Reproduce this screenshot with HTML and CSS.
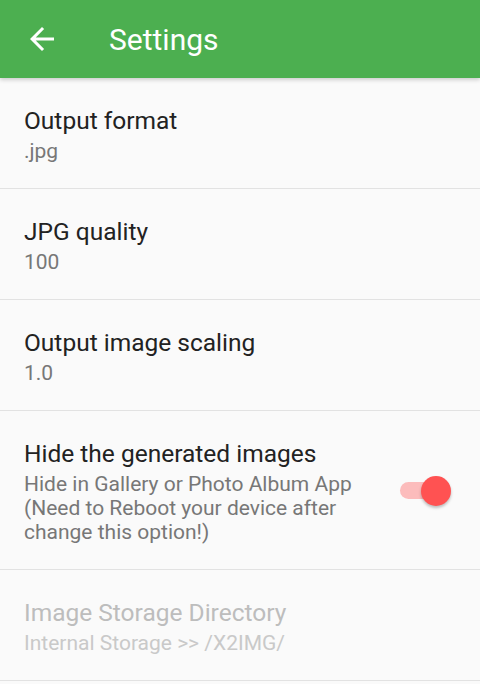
FILE: index.html
```html
<!DOCTYPE html>
<html>
<head>
<meta charset="utf-8">
<link rel="stylesheet" href="styles.css">
</head>
<body>
<header class="appbar">
  <svg class="back" viewBox="0 0 24 24" width="36" height="36"><path fill="#fff" d="M20 11H7.83l5.59-5.59L12 4l-8 8 8 8 1.41-1.41L7.83 13H20v-2z"/></svg>
  <h1 class="title">Settings</h1>
</header>
<main class="list">
  <div class="pref">
    <div class="text">
      <div class="pt">Output format</div>
      <div class="ps">.jpg</div>
    </div>
  </div>
  <div class="pref">
    <div class="text">
      <div class="pt">JPG quality</div>
      <div class="ps">100</div>
    </div>
  </div>
  <div class="pref">
    <div class="text">
      <div class="pt">Output image scaling</div>
      <div class="ps">1.0</div>
    </div>
  </div>
  <div class="pref">
    <div class="text">
      <div class="pt">Hide the generated images</div>
      <div class="ps">Hide in Gallery or Photo Album App<br>(Need to Reboot your device after<br>change this option!)</div>
    </div>
    <div class="switch">
      <div class="track"></div>
      <div class="thumb"></div>
    </div>
  </div>
  <div class="pref disabled">
    <div class="text">
      <div class="pt">Image Storage Directory</div>
      <div class="ps">Internal Storage &gt;&gt; /X2IMG/</div>
    </div>
  </div>
</main>
</body>
</html>
```
FILE: styles.css
```css
html, body {
  margin: 0;
  padding: 0;
  background: #fafafa;
  font-family: Roboto, "Liberation Sans", sans-serif;
}
.appbar {
  height: 78px;
  background: #4caf50;
  display: flex;
  align-items: center;
  box-shadow: 0 2px 4px rgba(0,0,0,0.18);
  position: relative;
  z-index: 1;
}
.back {
  margin-left: 24px;
  flex: none;
}
.title {
  margin: 0 0 0 49px;
  font-size: 30px;
  font-weight: 400;
  color: #fff;
  line-height: 1;
  padding-top: 1px;
}
.list {
  display: flex;
  flex-direction: column;
}
.pref {
  display: flex;
  align-items: center;
  padding: 26px 29px 25px 24px;
  border-bottom: 1px solid #e2e2e2;
}
.text {
  flex: 1;
}
.pt {
  font-size: 24.5px;
  line-height: 34px;
  color: #222;
}
.ps {
  margin-top: 1px;
  font-size: 21px;
  line-height: 24px;
  color: #777;
}
.disabled .pt { color: #bdbdbd; }
.disabled .ps { color: #c9c9c9; }
.switch {
  position: relative;
  width: 51px;
  height: 30px;
  flex: none;
}
.track {
  position: absolute;
  left: 0;
  top: 6px;
  width: 44px;
  height: 17px;
  border-radius: 9px;
  background: #fcbcbc;
}
.thumb {
  position: absolute;
  right: 0;
  top: 0;
  width: 30px;
  height: 30px;
  border-radius: 50%;
  background: #ff5252;
  box-shadow: 0 2px 3px rgba(0,0,0,0.25);
}
```
